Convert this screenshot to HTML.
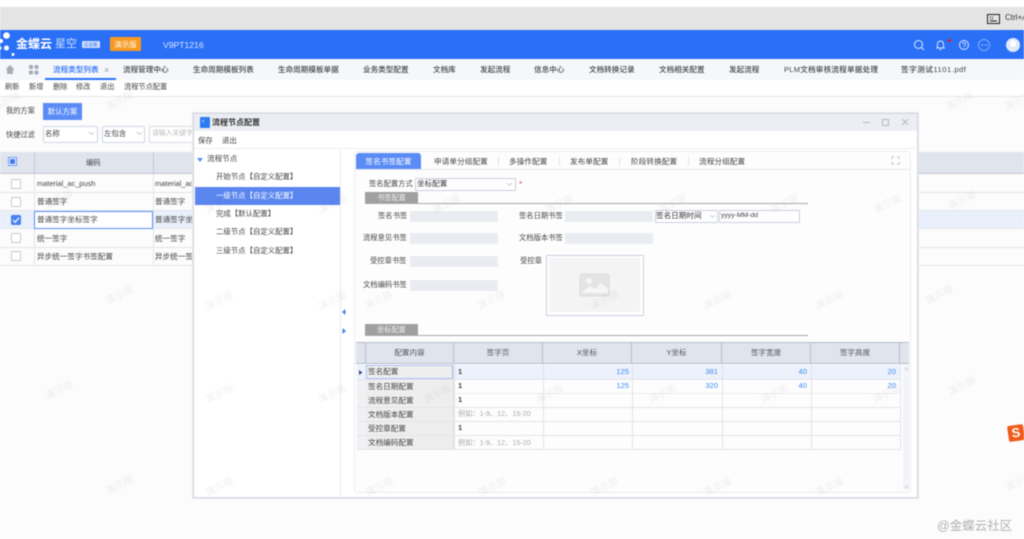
<!DOCTYPE html>
<html lang="zh"><head><meta charset="utf-8"><title>流程节点配置</title>
<style>
html,body{margin:0;padding:0}
body{width:1024px;height:539px;overflow:hidden;background:#fcfcfc;position:relative;font-family:"Liberation Sans","Noto Sans CJK SC",sans-serif;color:#444}
#r{position:absolute;left:0;top:0;width:1024px;height:539px;overflow:hidden;filter:blur(.45px)}
#r div,#r span,#r svg{position:absolute}
.t{line-height:12px;height:12px;white-space:nowrap;font-size:7.6px}
.w{font-size:10px;line-height:12px;color:rgba(90,90,90,.09);transform:rotate(-27deg);white-space:nowrap;z-index:9}
.inp{background:#e9ecf1;height:11px;width:88px}
.h{background:#e0e4ed;border-right:1px solid #b8bcc8;border-bottom:1px solid #b8bcc8;top:342px;height:21px;text-align:center;line-height:21px;font-size:7.6px;color:#555}
.c{left:366px;width:87px;background:#eee;border-right:1px solid #ddd}
.l{background:#e2e4ea;height:1px}
.v{background:#e2e4ea;width:1px}
.n{color:#3d8bf0;text-align:right;width:30px}
.cb{width:8px;height:8px;border:1px solid #c3c8d6;border-radius:1.5px;background:#fff;left:11px}
</style></head><body><div id="r">
<div style="left:0;top:0;width:1024px;height:7px;background:#fff"></div>
<div style="left:0;top:7px;width:1024px;height:23px;background:#e4e4e4"></div>
<svg style="left:987px;top:14px" width="13" height="10"><rect x=".5" y=".5" width="12" height="9" fill="none" stroke="#222"/><path d="M3 3h1M5 3h1M3 5h1M5 5h1M3 7h7" stroke="#222"/></svg>
<span class="t" style="left:1005px;top:12px;font-size:8px;color:#333">Ctrl+A</span>

<div style="left:0;top:30px;width:1024px;height:29px;background:#2a70f7"></div>
<svg style="left:0;top:30px" width="16" height="28"><circle cx="6.5" cy="5.5" r="3.3" fill="#fff"/><circle cx="1" cy="11" r="2" fill="#fff"/><circle cx="6.5" cy="18" r="2.5" fill="#fff"/><circle cx="13" cy="24.5" r="1.5" fill="#fff"/><circle cx="0" cy="18" r="1.5" fill="#fff"/></svg>
<span class="t" style="left:16px;top:38px;font-size:12px;font-weight:700;color:#fff">金蝶云</span>
<span class="t" style="left:55px;top:38px;font-size:11px;color:#cfe0ff">星空</span>
<div style="left:82px;top:41px;width:18px;height:7px;background:#cfe0ff;border-radius:1px"></div>
<span class="t" style="left:84px;top:39px;font-size:4.5px;color:#2a70f7">企业版</span>
<div style="left:110px;top:37px;width:31px;height:14px;background:#f79a1f;border-radius:1px;color:#fff;font-size:7.6px;line-height:15px;text-align:center">演示版</div>
<span class="t" style="left:163px;top:39px;font-size:8.6px;color:#dbe7ff">V9PT1216</span>
<svg style="left:912px;top:38px" width="85" height="14" fill="none" stroke="#dbe7ff" stroke-width="1"><circle cx="6.5" cy="6.5" r="4"/><path d="M9.5 9.5l2.5 2.5"/><path d="M24 10h9M25.5 10V6a3 3 0 0 1 6 0v4M27.5 11.5h2"/><circle cx="52" cy="7" r="4.5"/><path d="M50.500 6a1.500 1.500 0 1 1 2 1.500q-.5.200-.5 1M52 9.500v.5" stroke-width=".8"/><circle cx="72" cy="7" r="5.500" stroke="#7fa9fa"/><path d="M69.500 7h1M72 7h.5M74 7h1" stroke="#fff"/></svg>
<div style="left:948px;top:39px;width:3px;height:3px;border-radius:50%;background:#f11"></div>
<div style="left:1006px;top:38px;width:14px;height:14px;border-radius:50%;background:#dfe9fb"></div>
<div style="left:1010px;top:40px;width:6px;height:7px;border-radius:50%;background:#fff"></div>

<div style="left:0;top:59px;width:1024px;height:21px;background:#f5f7fb"></div>
<svg style="left:5px;top:64px" width="40" height="12" fill="#a7adb8"><path d="M5 1L.5 5.500H2V10h6V5.500h1.500z"/><rect x="24" y="1" width="4" height="4" rx="1"/><rect x="29.500" y="1" width="4" height="4" rx="1"/><rect x="24" y="6.500" width="4" height="4" rx="1"/><rect x="29.500" y="6.500" width="4" height="4" rx="1"/></svg>
<span class="t" style="left:53px;top:64px;color:#2a70f7;font-weight:500">流程类型列表</span>
<span class="t" style="left:104px;top:64px;color:#999;font-size:9px">×</span>
<div style="left:45px;top:78px;width:71px;height:1.500px;background:#2a70f7"></div>
<span class="t" style="left:123px;top:64px;font-weight:500">流程管理中心</span>
<span class="t" style="left:193px;top:64px;font-weight:500">生命周期模板列表</span>
<span class="t" style="left:278px;top:64px;font-weight:500">生命周期模板单据</span>
<span class="t" style="left:363px;top:64px;font-weight:500">业务类型配置</span>
<span class="t" style="left:433px;top:64px;font-weight:500">文档库</span>
<span class="t" style="left:480px;top:64px;font-weight:500">发起流程</span>
<span class="t" style="left:534px;top:64px;font-weight:500">信息中心</span>
<span class="t" style="left:589px;top:64px;font-weight:500">文档转换记录</span>
<span class="t" style="left:659px;top:64px;font-weight:500">文档相关配置</span>
<span class="t" style="left:729px;top:64px;font-weight:500">发起流程</span>
<span class="t" style="left:784px;top:64px;font-weight:500;letter-spacing:.2px">PLM文档审核流程单据处理</span>
<span class="t" style="left:901px;top:64px;font-weight:500;letter-spacing:.5px">签字测试1101.pdf</span>

<div style="left:0;top:80px;width:1024px;height:16px;background:#fff"></div>
<div style="left:0;top:96px;width:1024px;height:1px;background:#e8e8ea"></div>
<span class="t" style="left:5px;top:81px;font-size:7.200px">刷新</span>
<span class="t" style="left:29px;top:81px;font-size:7.200px">新增</span>
<span class="t" style="left:53px;top:81px;font-size:7.200px">删除</span>
<span class="t" style="left:76px;top:81px;font-size:7.200px">修改</span>
<span class="t" style="left:100px;top:81px;font-size:7.200px">退出</span>
<span class="t" style="left:124px;top:81px;font-size:7.200px">流程节点配置</span>

<span class="t" style="left:6px;top:105px;font-size:7.200px">我的方案</span>
<div style="left:43px;top:103px;width:39px;height:17px;background:#5b8cf6;color:#fff;font-size:7.400px;line-height:17px;text-align:center">默认方案</div>
<span class="t" style="left:6px;top:129px;font-size:7.200px">快捷过滤</span>
<div style="left:43px;top:126px;width:53px;height:15px;background:#fff;border:1px solid #cfd5e2;border-radius:2px"></div>
<span class="t" style="left:45px;top:128px;font-size:7.400px">名称</span>
<div style="left:102px;top:126px;width:41px;height:15px;background:#fff;border:1px solid #cfd5e2;border-radius:2px"></div>
<span class="t" style="left:104px;top:128px;font-size:7.400px">左包含</span>
<div style="left:149px;top:126px;width:60px;height:15px;background:#fff;border:1px solid #d8dce6;border-radius:2px"></div>
<span class="t" style="left:152px;top:128px;font-size:6.800px;color:#bbb">请输入关键字</span>
<svg style="left:88px;top:131px" width="8" height="5" fill="none" stroke="#b8bcc8" stroke-width=".7"><path d="M1 1l2.500 2.500L6 1"/></svg>
<svg style="left:136px;top:131px" width="8" height="5" fill="none" stroke="#b8bcc8" stroke-width=".7"><path d="M1 1l2.500 2.500L6 1"/></svg>

<div style="left:0;top:152px;width:1024px;height:21px;background:#e0e4ed;border-bottom:1px solid #c4c8d4"></div>
<div style="left:34px;top:152px;width:1px;height:22px;background:#c4c8d4"></div>
<div style="left:153px;top:152px;width:1px;height:22px;background:#c4c8d4"></div>
<span class="t" style="left:86px;top:157px;font-size:7.200px">编码</span>
<div style="left:8px;top:157px;width:7px;height:7px;border:1px solid #6d9af7;background:#fff;padding:0"></div>
<div style="left:10px;top:159px;width:5px;height:5px;background:#3f78ee"></div>
<div class="l" style="left:0;top:192px;width:1024px"></div>
<div style="left:0;top:211px;width:1024px;height:17px;background:#eaf0fb"></div>
<div class="l" style="left:0;top:210px;width:1024px"></div>
<div class="l" style="left:0;top:228px;width:1024px"></div>
<div class="l" style="left:0;top:247px;width:1024px"></div>
<div class="l" style="left:0;top:265px;width:1024px"></div>
<div class="v" style="left:34px;top:174px;height:91px"></div>
<div class="v" style="left:153px;top:174px;height:91px"></div>
<div class="cb" style="top:179px"></div>
<div class="cb" style="top:197px"></div>
<div style="left:11px;top:215px;width:10px;height:10px;background:#4a80f0;border-radius:1.500px"></div>
<svg style="left:11px;top:215px" width="10" height="10" fill="none" stroke="#fff" stroke-width="1.200"><path d="M2 5l2.200 2.300L8 2.800"/></svg>
<div class="cb" style="top:233px"></div>
<div class="cb" style="top:251px"></div>
<div style="left:34px;top:211px;width:117px;height:16px;background:#fff;border:1px solid #5b8cf6"></div>
<span class="t" style="left:37px;top:178px;font-size:7.400px">material_ac_push</span><span class="t" style="left:155px;top:178px;font-size:7.400px">material_ac</span>
<span class="t" style="left:37px;top:196px">普通签字</span><span class="t" style="left:155px;top:196px">普通签字</span>
<span class="t" style="left:37px;top:214px">普通签字坐标签字</span><span class="t" style="left:155px;top:214px">普通签字坐标</span>
<span class="t" style="left:37px;top:233px">统一签字</span><span class="t" style="left:155px;top:233px">统一签字</span>
<span class="t" style="left:37px;top:251px">异步统一签字书签配置</span><span class="t" style="left:155px;top:251px">异步统一签字</span>

<span class="w" style="left:-8px;top:96px">演示版</span><span class="w" style="left:105px;top:96px">演示版</span>
<span class="w" style="left:45px;top:194px">演示版</span><span class="w" style="left:105px;top:290px">演示版</span>
<span class="w" style="left:45px;top:385px">演示版</span><span class="w" style="left:105px;top:480px">演示版</span>
<span class="w" style="left:945px;top:96px">演示版</span><span class="w" style="left:1004px;top:96px">演示版</span>
<span class="w" style="left:948px;top:195px">演示版</span><span class="w" style="left:948px;top:381px">演示版</span>
<span class="w" style="left:1005px;top:477px">演示版</span><span class="w" style="left:925px;top:290px">演示版</span>

<!-- modal -->
<div style="left:193px;top:113px;width:723px;height:383px;background:#fff;border:1px solid #d6d8e2;box-shadow:0 0 0 1px #e6e7ee"></div>
<div style="left:194px;top:114px;width:723px;height:17px;background:#eceef3"></div>
<div style="left:200px;top:117px;width:10px;height:11px;background:#2b7cf0;border-radius:1px"></div>
<span class="t" style="left:202px;top:116px;font-size:7px;color:#fff">‹</span>
<span class="t" style="left:212px;top:117px;font-size:8px;font-weight:700;color:#333">流程节点配置</span>
<svg style="left:862px;top:117px" width="50" height="11" fill="none" stroke="#a8acb6" stroke-width=".8"><path d="M1 5.500h7"/><rect x="20.500" y="2.500" width="6" height="6"/><path d="M40 2l6 6M46 2l-6 6"/></svg>
<span class="t" style="left:198px;top:135px;font-size:7.400px">保存</span>
<span class="t" style="left:222px;top:135px;font-size:7.400px">退出</span>
<div class="l" style="left:194px;top:148px;width:722px;background:#eceef2"></div>
<div class="v" style="left:340px;top:148px;height:348px;background:#e8eaf0"></div>
<svg style="left:197px;top:157px" width="8" height="6"><path d="M0 1h6L3 5z" fill="#5b8cf6"/></svg>
<span class="t" style="left:207px;top:153px;font-size:7.600px">流程节点</span>
<span class="t" style="left:216px;top:171px;font-size:7.400px">开始节点【自定义配置】</span>
<div style="left:195px;top:187px;width:145px;height:18px;background:#5b86f0"></div>
<span class="t" style="left:216px;top:190px;font-size:7.400px;color:#fff">一级节点【自定义配置】</span>
<span class="t" style="left:216px;top:208px;font-size:7.400px">完成【默认配置】</span>
<span class="t" style="left:216px;top:226px;font-size:7.400px">二级节点【自定义配置】</span>
<span class="t" style="left:216px;top:245px;font-size:7.400px">三级节点【自定义配置】</span>
<svg style="left:341px;top:309px" width="6" height="26" fill="#4a80f0"><path d="M4.500 0v6L1 3z"/><path d="M1.500 19v6L5 22z"/></svg>

<div style="left:354px;top:151px;width:555px;height:340px;border:1px solid #eceef3;border-radius:3px;background:#fdfdfe"></div>
<div class="l" style="left:355px;top:169px;width:555px;background:#e6e9f0"></div>
<div style="left:356px;top:153px;width:65px;height:16px;background:#5b8cf6;border-radius:3px 3px 0 0;color:#fff;font-size:7.600px;line-height:17px;text-align:center;letter-spacing:.1px">签名书签配置</div>
<span class="t" style="left:434px;top:156px;letter-spacing:.1px">申请单分组配置</span>
<span class="t" style="left:509px;top:156px;letter-spacing:.1px">多操作配置</span>
<span class="t" style="left:570px;top:156px;letter-spacing:.1px">发布单配置</span>
<span class="t" style="left:631px;top:156px;letter-spacing:.1px">阶段转换配置</span>
<span class="t" style="left:699px;top:156px;letter-spacing:.1px">流程分组配置</span>
<div class="v" style="left:498px;top:157px;height:9px"></div><div class="v" style="left:559px;top:157px;height:9px"></div><div class="v" style="left:619px;top:157px;height:9px"></div><div class="v" style="left:688px;top:157px;height:9px"></div>
<svg style="left:891px;top:156px" width="9" height="9" fill="none" stroke="#a8b0c0" stroke-width=".7"><path d="M1 3V1h2M6 1h2v2M1 6v2h2M8 6v2H6"/></svg>

<span class="t" style="left:369px;top:178px;font-size:7.300px">签名配置方式</span>
<div style="left:415px;top:178px;width:99px;height:11px;background:#fff;border:1px solid #c9cfdc;border-radius:1px"></div>
<span class="t" style="left:417px;top:178px;font-size:7.600px;color:#333">坐标配置</span>
<svg style="left:506px;top:182px" width="7" height="5" fill="none" stroke="#b8bcc8" stroke-width=".7"><path d="M1 1l2.500 2.500L6 1"/></svg>
<span class="t" style="left:519px;top:179px;font-size:8px;color:#e44">*</span>
<div style="left:365px;top:192px;width:53px;height:11px;background:#a0a0a0;color:#eee;font-size:7.200px;line-height:12px;text-align:center">书签配置</div>
<div style="left:365px;top:203px;width:443px;height:1.200px;background:#a8a8a8"></div>

<span class="t" style="left:378px;top:210px;font-size:7.300px">签名书签</span><div class="inp" style="left:410px;top:211px"></div>
<span class="t" style="left:363px;top:232px;font-size:7.300px">流程意见书签</span><div class="inp" style="left:410px;top:233px"></div>
<span class="t" style="left:370px;top:255px;font-size:7.300px">受控章书签</span><div class="inp" style="left:410px;top:256px"></div>
<span class="t" style="left:363px;top:279px;font-size:7.300px">文档编码书签</span><div class="inp" style="left:410px;top:280px"></div>
<span class="t" style="left:519px;top:210px;font-size:7.300px">签名日期书签</span><div class="inp" style="left:565px;top:211px"></div>
<span class="t" style="left:519px;top:232px;font-size:7.300px">文档版本书签</span><div class="inp" style="left:565px;top:233px"></div>
<div style="left:655px;top:210px;width:61px;height:11px;background:#fff;border:1px solid #c9cfdc;border-radius:1px"></div>
<span class="t" style="left:656px;top:210px;font-size:7.600px;color:#333">签名日期时间</span>
<svg style="left:709px;top:214px" width="7" height="5" fill="none" stroke="#b8bcc8" stroke-width=".7"><path d="M1 1l2.500 2.500L6 1"/></svg>
<div style="left:719px;top:210px;width:79px;height:11px;background:#fff;border:1px solid #c9cfdc;border-radius:1px"></div>
<span class="t" style="left:721px;top:210px;font-size:6.800px;color:#444">yyyy-MM-dd</span>
<span class="t" style="left:520px;top:255px;font-size:7.300px">受控章</span>
<div style="left:546px;top:255px;width:96px;height:59px;background:#fff;border:1px solid #c9d0de;border-radius:1px"></div>
<div style="left:549px;top:258px;width:91px;height:54px;background:#f4f4f4"></div>
<svg style="left:579px;top:273px" width="32" height="25"><rect x="1" y="1" width="29" height="22" rx="2" fill="#e4e4e4" stroke="#dcdcdc"/><circle cx="10" cy="8" r="3" fill="#f6f6f6"/><path d="M3 19l8-6 5 3 6-6 7 6v4H3z" fill="#f6f6f6"/></svg>

<div style="left:365px;top:324px;width:53px;height:11px;background:#a0a0a0;color:#eee;font-size:7.200px;line-height:12px;text-align:center">坐标配置</div>
<div style="left:365px;top:335px;width:443px;height:1.200px;background:#a8a8a8"></div>

<!-- grid -->
<div style="left:356px;top:342px;width:10px;height:22px;background:#e0e4ed;border-bottom:1px solid #b8bcc8;box-sizing:border-box;border-right:1px solid #b8bcc8"></div>
<div class="h" style="left:366px;width:87px">配置内容</div>
<div class="h" style="left:454px;width:88px">签字页</div>
<div class="h" style="left:543px;width:88px">X坐标</div>
<div class="h" style="left:632px;width:89px">Y坐标</div>
<div class="h" style="left:722px;width:88px">签字宽度</div>
<div class="h" style="left:811px;width:88px">签字高度</div>
<div style="left:900px;top:342px;width:9px;height:21px;background:#e0e4ed;border-bottom:1px solid #b8bcc8;border-radius:0 2px 0 0"></div>
<div style="left:356px;top:342px;width:553px;height:1px;background:#b8bcc8"></div>
<div style="left:357px;top:365px;width:544px;height:14px;background:#ecf1fb"></div>
<div class="c" style="top:365px;height:14px;background:#eee;box-shadow:inset 0 0 0 1px #a9c0f2"></div>
<div class="c" style="top:380px;height:13px"></div>
<div class="c" style="top:394px;height:13px"></div>
<div class="c" style="top:408px;height:13px"></div>
<div class="c" style="top:422px;height:13px"></div>
<div class="c" style="top:436px;height:13px"></div>
<div style="left:357px;top:380px;width:9px;height:69px;background:#f1f1f3"></div>
<div class="l" style="left:357px;top:379px;width:544px"></div><div class="l" style="left:357px;top:393px;width:544px;background:#eee"></div><div class="l" style="left:357px;top:407px;width:544px"></div><div class="l" style="left:357px;top:421px;width:544px"></div><div class="l" style="left:357px;top:435px;width:544px"></div><div class="l" style="left:357px;top:449px;width:544px"></div>
<div class="v" style="left:543px;top:364px;height:85px"></div><div class="v" style="left:632px;top:364px;height:85px"></div><div class="v" style="left:722px;top:364px;height:85px"></div><div class="v" style="left:811px;top:364px;height:85px"></div><div class="v" style="left:900px;top:364px;height:85px"></div><div class="v" style="left:454px;top:364px;height:85px"></div>
<div style="left:903px;top:365px;width:6px;height:125px;background:#f2f4f9"></div>
<svg style="left:904px;top:367px" width="5" height="122" fill="none" stroke="#b8bcc8" stroke-width=".6"><path d="M.5 3L2.500 1l2 2M.5 119l2 2 2-2"/></svg>
<svg style="left:359px;top:370px" width="4" height="5"><path d="M0 0l3.500 2.500L0 5z" fill="#35507f"/></svg>
<span class="t" style="left:368px;top:366px">签名配置</span>
<span class="t" style="left:368px;top:381px">签名日期配置</span>
<span class="t" style="left:368px;top:395px">流程意见配置</span>
<span class="t" style="left:368px;top:409px">文档版本配置</span>
<span class="t" style="left:368px;top:423px">受控章配置</span>
<span class="t" style="left:368px;top:437px">文档编码配置</span>
<span class="t" style="left:458px;top:366px;font-weight:700">1</span><span class="t" style="left:458px;top:380px;font-weight:700">1</span><span class="t" style="left:458px;top:394px;font-weight:700">1</span><span class="t" style="left:458px;top:422px;font-weight:700">1</span>
<span class="t" style="left:458px;top:408px;color:#aaa;font-size:7.200px">例如：1-9、12、15-20</span>
<span class="t" style="left:458px;top:437px;color:#aaa;font-size:7.200px">例如：1-9、12、15-20</span>
<span class="t n" style="left:599px;top:366px">125</span><span class="t n" style="left:688px;top:366px">381</span><span class="t n" style="left:777px;top:366px">40</span><span class="t n" style="left:866px;top:366px">20</span>
<span class="t n" style="left:599px;top:380px">125</span><span class="t n" style="left:688px;top:380px">320</span><span class="t n" style="left:777px;top:380px">40</span><span class="t n" style="left:866px;top:380px">20</span>

<span class="w" style="left:205px;top:199px">演示版</span><span class="w" style="left:318px;top:199px">演示版</span><span class="w" style="left:205px;top:296px">演示版</span><span class="w" style="left:318px;top:296px">演示版</span><span class="w" style="left:205px;top:389px">演示版</span><span class="w" style="left:318px;top:389px">演示版</span><span class="w" style="left:205px;top:482px">演示版</span>
<span class="w" style="left:432px;top:199px">演示版</span><span class="w" style="left:545px;top:199px">演示版</span><span class="w" style="left:658px;top:199px">演示版</span><span class="w" style="left:770px;top:199px">演示版</span><span class="w" style="left:873px;top:199px">演示版</span>
<span class="w" style="left:364px;top:295px">演示版</span><span class="w" style="left:477px;top:295px">演示版</span><span class="w" style="left:590px;top:295px">演示版</span><span class="w" style="left:703px;top:295px">演示版</span><span class="w" style="left:815px;top:295px">演示版</span>
<span class="w" style="left:423px;top:389px">演示版</span><span class="w" style="left:535px;top:389px">演示版</span><span class="w" style="left:648px;top:389px">演示版</span><span class="w" style="left:760px;top:389px">演示版</span><span class="w" style="left:872px;top:389px">演示版</span>
<span class="w" style="left:365px;top:482px">演示版</span><span class="w" style="left:478px;top:482px">演示版</span><span class="w" style="left:590px;top:482px">演示版</span><span class="w" style="left:703px;top:482px">演示版</span><span class="w" style="left:815px;top:482px">演示版</span>

<div style="left:1008px;top:425px;width:16px;height:16px;background:#f05a1a;border-radius:2px;transform:rotate(-8deg);color:#fff;font:700 13px/16px 'Liberation Sans',sans-serif;text-align:center">S</div>
<span class="t" style="left:937px;top:519px;height:15px;line-height:15px;font-size:12.500px;color:#b0b0b0">@金蝶云社区</span>
</div></body></html>
